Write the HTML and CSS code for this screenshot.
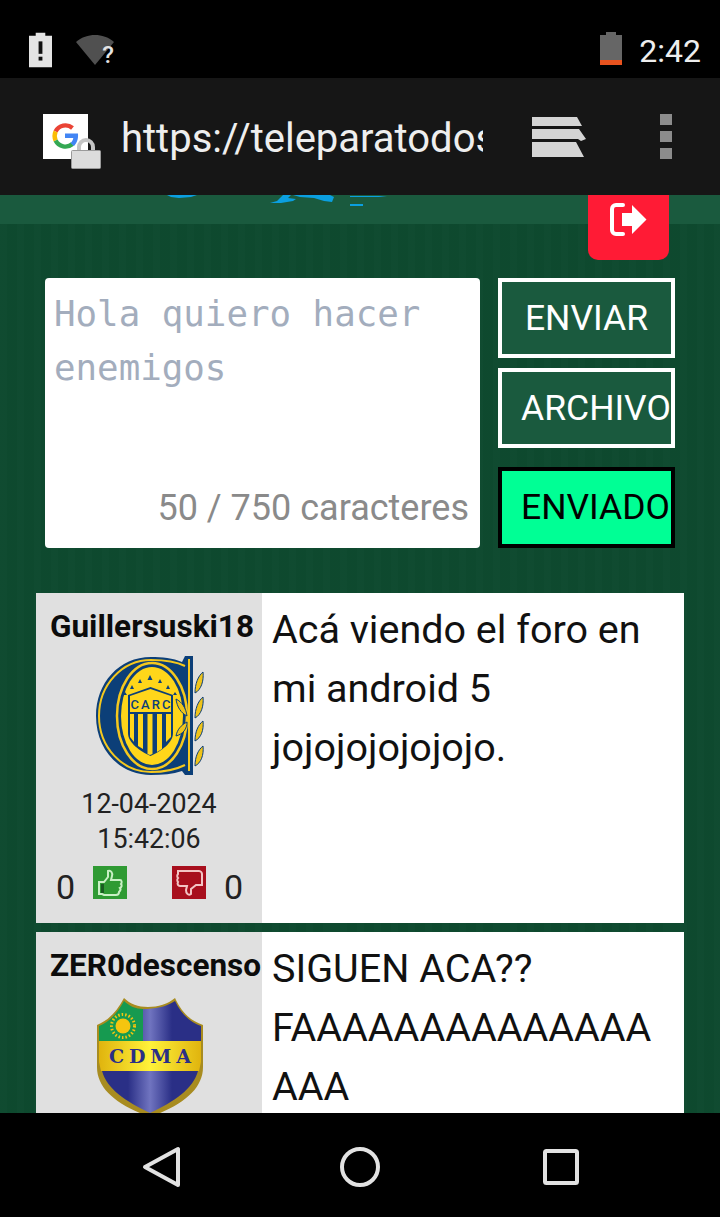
FILE: index.html
```html
<!DOCTYPE html>
<html lang="es">
<head>
<meta charset="utf-8">
<title>Foro</title>
<link rel="stylesheet" href="styles.css">
</head>
<body>
<div class="phone">
  <header class="status">
    <div class="status-left">
      <svg class="ic-batt-alert" viewBox="0 0 24 36"><path fill="#e4e4e4" d="M7 0h10v3h7v33H0V3h7z"/><rect x="10" y="9" width="4" height="13" fill="#111"/><rect x="10" y="25" width="4" height="4" fill="#111"/></svg>
      <div class="wifi">
        <svg class="ic-wifi" viewBox="0 0 38 30"><path fill="#505050" d="M0 7C6 2 12 0 19 0s13 2 19 7L19 30z"/></svg>
        <span class="wifi-q">?</span>
      </div>
    </div>
    <div class="status-right">
      <svg class="ic-batt" viewBox="0 0 22 33"><path fill="#666" d="M6 0h10v3h6v25H0V3h6z"/><rect y="28" width="22" height="5" fill="#e8531f"/></svg>
      <span class="clock">2:42</span>
    </div>
  </header>

  <div class="toolbar">
    <div class="favicon">
      <svg class="ic-g" viewBox="0 0 28 28">
        <path fill="none" stroke="#ea4335" stroke-width="4.4" d="M4.600 9.500A11 11 0 0 1 21.500 6"/>
        <path fill="none" stroke="#fbbc05" stroke-width="4.4" d="M4.600 9.500a11 11 0 0 0 0 9"/>
        <path fill="none" stroke="#34a853" stroke-width="4.4" d="M4.600 18.500A11 11 0 0 0 21.500 22"/>
        <path fill="#4285f4" d="M14 11.500h13c.5 6-1.500 10-4 12.500l-3.500-3c1.500-1.200 2.500-2.800 2.800-5H14z"/>
      </svg>
      <svg class="ic-lock" viewBox="0 0 30 31"><path fill="none" stroke="#c4c4c4" stroke-width="4" d="M8 14V9a7 7 0 0 1 14 0v5"/><rect x=".5" y="12.500" width="29" height="18" rx="1" fill="#dcdcdc" stroke="#9a9a9a"/></svg>
    </div>
    <div class="url">https://teleparatodos.com.ar/foro</div>
    <svg class="ic-tabs" viewBox="0 0 54 41">
      <path fill="#d4d4d4" d="M0 1h45l5 9H0z"/>
      <path fill="#d4d4d4" d="M0 13h47l7 10-5 2-3-2H0z"/>
      <path fill="#d4d4d4" d="M0 26h44l8 15H0z"/>
    </svg>
    <div class="dots"><i></i><i></i><i></i></div>
  </div>

  <main class="content">
    <div class="strip">
      <svg class="banner" viewBox="0 0 720 29" preserveAspectRatio="none">
        <path fill="#0b9fe0" d="M167 0h30l-6 2-12 1-8-1zM270 8l7-2 3-3 3-3h8l-3 3 8 1-3 2-12 2zM293 0h37l4 2-2 5-8-1-10-3-14-1zM350 1h37l-8 1h-29zM350 9h13v2h-13z"/>
      </svg>
    </div>
    <a class="logout" href="#">
      <svg class="ic-logout" viewBox="0 0 37 33">
        <path fill="none" stroke="#fff" stroke-width="4" stroke-linecap="round" d="M13 2H6a4 4 0 0 0-4 4v21a4 4 0 0 0 4 4h7"/>
        <path fill="#fff" d="M12 10h10V2l14.500 14.500L22 31v-8H12z"/>
      </svg>
    </a>

    <form class="composer">
      <div class="input">
        <div class="placeholder">Hola quiero hacer enemigos</div>
        <div class="counter">50 / 750 caracteres</div>
      </div>
      <div class="actions">
        <div class="btn">ENVIAR</div>
        <div class="btn">ARCHIVO</div>
        <div class="btn btn-sent">ENVIADO</div>
      </div>
    </form>

    <section class="posts">
      <article class="post post-first">
        <div class="author">
          <div class="name">Guillersuski18</div>
          <svg class="crest" viewBox="0 0 110 122">
            <path fill="#0c3f78" d="M90 2h8v119h-8l-3-4c-9 3-20 4-31 4C24 121 1 95 1 62S24 3 56 3c11 0 22 1 31 5z"/>
            <path fill="none" stroke="#f5c81e" stroke-width="2" d="M90 12C80 7 68 6 56 6 27 6 4 31 4 62s23 56 52 56c12 0 24-2 34-7"/>
            <path fill="none" stroke="#f5c81e" stroke-width="2" d="M94 5v112"/>
            <ellipse cx="57" cy="62" rx="35" ry="53" fill="#0c3f78" stroke="#f5c81e" stroke-width="2.500"/>
            <ellipse cx="57" cy="62" rx="31" ry="49" fill="#ffd61a"/>
            <path fill="#0c3f78" d="M33 41l22.500-8L78 41v38c0 10-12 18-22.500 23C45 97 33 89 33 79z"/>
            <path fill="#ffd61a" d="M35 42l20.500-7L76 42v16H35z"/>
            <text class="carc" x="55.500" y="55" textLength="40" lengthAdjust="spacing">CARC</text>
            <path fill="#ffd61a" d="M35 60h4v28l-4-5zM43 60h5v35l-5-3zM52.500 60h5v40l-2.500 1-2.500-1zM62 60h5v35l-5 3zM71 60h5v23l-5 5z"/>
            <path fill="#0c3f78" d="M37 31l2 4h-4zM45 25l2 4h-4zM55 21l2.500 5h-5zM65 25l2 4h-4zM73 31l2 4h-4zM30 38l2 3h-4zM80 38l2 3h-4z"/>
            <path fill="#f0c41a" stroke="#0c3f78" d="M100 39c0-9 3-17 8-21 1 9-2 18-8 21zM100 64c0-9 3-17 8-21 1 9-2 18-8 21zM100 87c0-9 3-16 8-20 1 9-2 17-8 20zM100 112c0-9 3-16 8-20 1 9-2 17-8 20z"/>
            <path fill="#f0c41a" stroke="#0c3f78" d="M81 45c6 3 10 9 11 17-6-3-10-9-11-17zM81 82c1-6 5-11 11-14 0 7-4 12-11 14z"/>
          </svg>
          <div class="stamp">12-04-2024<br>15:42:06</div>
          <div class="votes">
            <span class="count">0</span>
            <svg class="thumb thumb-up" viewBox="0 0 34 33"><rect width="34" height="33" fill="#2f9a33"/><path fill="none" stroke="#c9f0c4" stroke-width="2" d="M6 16h5l4-5V5c3-1 5 2 4 5l-1 4h9c2 0 2 3 1 4 1 1 1 3-1 4 1 1 0 3-1 4 0 2-1 3-3 3H11l-2-1H6z"/><path fill="#1a5c22" d="M8 18h3v9H8z"/></svg>
            <svg class="thumb thumb-down" viewBox="0 0 34 33"><rect width="34" height="33" fill="#a80f1d"/><path fill="none" stroke="#f3c4c4" stroke-width="2" d="M6 5h21c2 0 3 2 3 3v11h-6l-5 4v5c-3 2-5-1-5-4l1-4H8c-2 0-3-2-2-4-1-1-1-3 0-4-1-1-1-3 0-4z"/></svg>
            <span class="count">0</span>
          </div>
        </div>
        <div class="message">Acá viendo el foro en mi android 5 jojojojojojojo.</div>
      </article>

      <article class="post">
        <div class="author">
          <div class="name">ZER0descenso</div>
          <svg class="crest crest-cdma" viewBox="0 0 110 122">
            <defs>
              <linearGradient id="blue" gradientUnits="userSpaceOnUse" x1="0" x2="110" y1="0" y2="0">
                <stop offset=".3" stop-color="#2a2f86"/><stop offset=".5" stop-color="#7074c0"/><stop offset=".7" stop-color="#2a2f86"/>
              </linearGradient>
              <linearGradient id="gold" x1="0" x2="1" y1="0" y2="0">
                <stop offset="0" stop-color="#e0b40e"/><stop offset=".5" stop-color="#fff23a"/><stop offset="1" stop-color="#e0b40e"/>
              </linearGradient>
            </defs>
            <path fill="#a88c20" d="M2 30C12 26 21 18 29 3c6 6 14 9 24 9s20-3 27-9c7 15 16 23 28 27v42c0 22-20 38-53 50C22 110 2 94 2 72z"/>
            <path fill="#169a50" d="M4 31c10-4 18-12 25-25 5 5 12 8 19 8v32H4z"/>
            <path fill="url(#blue)" d="M48 14c12 0 23-2 32-8 6 13 15 21 26 25v15H48z"/>
            <path fill="url(#gold)" d="M4 46h102v21l-2 9H6l-2-9z"/>
            <path fill="url(#blue)" d="M7 76h96C98 94 80 106 55 118 30 106 12 94 7 76z"/>
            <circle cx="28" cy="31" r="7.500" fill="#f5c50f"/>
            <circle cx="28" cy="31" r="11.500" fill="none" stroke="#f5c50f" stroke-width="3" stroke-dasharray="1.500 2"/>
            <text class="cdma" x="55" y="68" textLength="82" lengthAdjust="spacing">CDMA</text>
          </svg>
        </div>
        <div class="message">SIGUEN ACA?? FAAAAAAAAAAAAAAAAA</div>
      </article>
    </section>
  </main>

  <nav class="navbar">
    <svg class="ic-back" viewBox="0 0 38 42"><path fill="none" stroke="#e2e2e2" stroke-width="4" stroke-linejoin="round" d="M36 3v36L3 21z"/></svg>
    <svg class="ic-home" viewBox="0 0 40 40"><circle cx="20" cy="20" r="18" fill="none" stroke="#e2e2e2" stroke-width="4"/></svg>
    <svg class="ic-recent" viewBox="0 0 36 36"><rect x="2" y="2" width="32" height="32" rx="1.500" fill="none" stroke="#e2e2e2" stroke-width="4"/></svg>
  </nav>
</div>
</body>
</html>
```

FILE: styles.css
```css
* { box-sizing: border-box; }
html, body { margin: 0; padding: 0; background: #000; }
body { font-family: Roboto, "Liberation Sans", sans-serif; }

.phone { width: 720px; height: 1217px; display: flex; flex-direction: column; overflow: hidden; }

/* status bar */
.status { height: 78px; flex: none; background: #000; display: flex; justify-content: space-between; align-items: flex-start; padding: 32px 19px 0 29px; }
.status-left { display: flex; gap: 24px; }
.ic-batt-alert { width: 23px; height: 36px; display: block; }
.wifi { position: relative; width: 38px; height: 30px; margin-top: 3px; }
.ic-wifi { width: 38px; height: 30px; display: block; }
.wifi-q { position: absolute; right: 0; bottom: -2px; font-size: 24px; line-height: 24px; font-weight: 500; color: #e4e4e4; }
.status-right { display: flex; gap: 17px; }
.ic-batt { width: 22px; height: 33px; display: block; }
.clock { color: #eee; font-size: 32px; line-height: 36px; margin-top: 1px; }

/* browser toolbar */
.toolbar { height: 117px; flex: none; background: #161616; display: flex; align-items: center; padding-left: 43px; }
.favicon { position: relative; width: 45px; height: 45px; background: #fff; flex: none; }
.ic-g { position: absolute; left: 8px; top: 8px; width: 28px; height: 28px; }
.ic-lock { position: absolute; left: 28px; top: 24px; width: 30px; height: 31px; }
.url { width: 362px; margin: 4px 0 0 33px; overflow: hidden; white-space: nowrap; color: #eee; font-size: 40px; line-height: 50px; flex: none; }
.ic-tabs { width: 54px; height: 41px; margin-left: 49px; flex: none; }
.dots { margin-left: 74px; display: flex; flex-direction: column; gap: 6px; flex: none; }
.dots i { display: block; width: 12px; height: 11px; background: #8c8c8c; }

/* page */
.content {
  position: relative; flex: 1; overflow: hidden; background-color: #0e4a2f;
  background-image: repeating-linear-gradient(90deg, rgba(255,255,255,.006) 0 7px, rgba(0,0,0,.012) 7px 17px);
}
.strip { height: 29px; background: #1a5a3e; }
.banner { display: block; width: 100%; height: 29px; }
.logout { position: absolute; top: 0; left: 588px; width: 81px; height: 65px; background: #ff1b35; border-radius: 0 0 10px 10px; display: flex; justify-content: center; padding-top: 8px; }
.ic-logout { width: 37px; height: 33px; }

.composer { display: flex; gap: 18px; margin: 54px 45px 0; }
.input { width: 435px; height: 270px; background: #fff; border-radius: 4px; padding: 9px 11px 20px 9px; display: flex; flex-direction: column; justify-content: space-between; }
.placeholder { font-family: "DejaVu Sans Mono", "Liberation Mono", monospace; font-size: 35.800px; line-height: 54px; color: #a3adbd; }
.counter { text-align: right; color: #8a8a8a; font-size: 36px; line-height: 40px; }
.actions { display: flex; flex-direction: column; flex: none; width: 177px; }
.btn { height: 80px; border: 4px solid #fff; background: #1a5a3e; color: #fff; font-size: 35.500px; line-height: 72px; padding: 0 19px; text-align: center; white-space: nowrap; overflow: hidden; }
.btn + .btn { margin-top: 10px; }
.btn-sent { height: 81px; margin-top: 19px !important; border-color: #000; background: #00ff95; color: #000; line-height: 73px; }

/* posts */
.posts { margin: 45px 36px 0; display: flex; flex-direction: column; gap: 9px; }
.post { display: flex; background: #fff; }
.post-first { height: 330px; }
.author { width: 226px; flex: none; background: #e0e0e0; padding-top: 17px; }
.name { font-size: 31.500px; line-height: 34px; font-weight: 700; color: #0c0c0c; padding-left: 14px; white-space: nowrap; }
.crest { display: block; width: 110px; height: 122px; margin: 10px 0 0 59px; }
.crest-cdma { margin-top: 12px; }
.carc { font: 500 13px Roboto, sans-serif; fill: #0c3f78; text-anchor: middle; }
.cdma { font: 700 19px "DejaVu Serif", serif; fill: #2a2f86; text-anchor: middle; }
.stamp { text-align: center; font-size: 26.800px; line-height: 35px; color: #222; margin-top: 11px; }
.votes { display: flex; align-items: center; padding-left: 20px; margin-top: 8px; height: 44px; }
.count { font-size: 34px; color: #222; line-height: 40px; width: 18px; }
.thumb { width: 34px; height: 33px; flex: none; margin-top: -9px; }
.thumb-up { margin-left: 19px; }
.thumb-down { margin-left: 45px; margin-right: 18px; }
.message { flex: 1; min-width: 0; padding: 7px 28px 0 10px; font-size: 39.500px; line-height: 59px; color: #111; overflow-wrap: anywhere; }

/* nav bar */
.navbar { height: 104px; flex: none; background: #000; display: flex; align-items: center; padding: 4px 0 0 142px; }
.ic-back { width: 38px; height: 42px; }
.ic-home { width: 40px; height: 40px; margin-left: 160px; }
.ic-recent { width: 36px; height: 36px; margin-left: 163px; }
```
